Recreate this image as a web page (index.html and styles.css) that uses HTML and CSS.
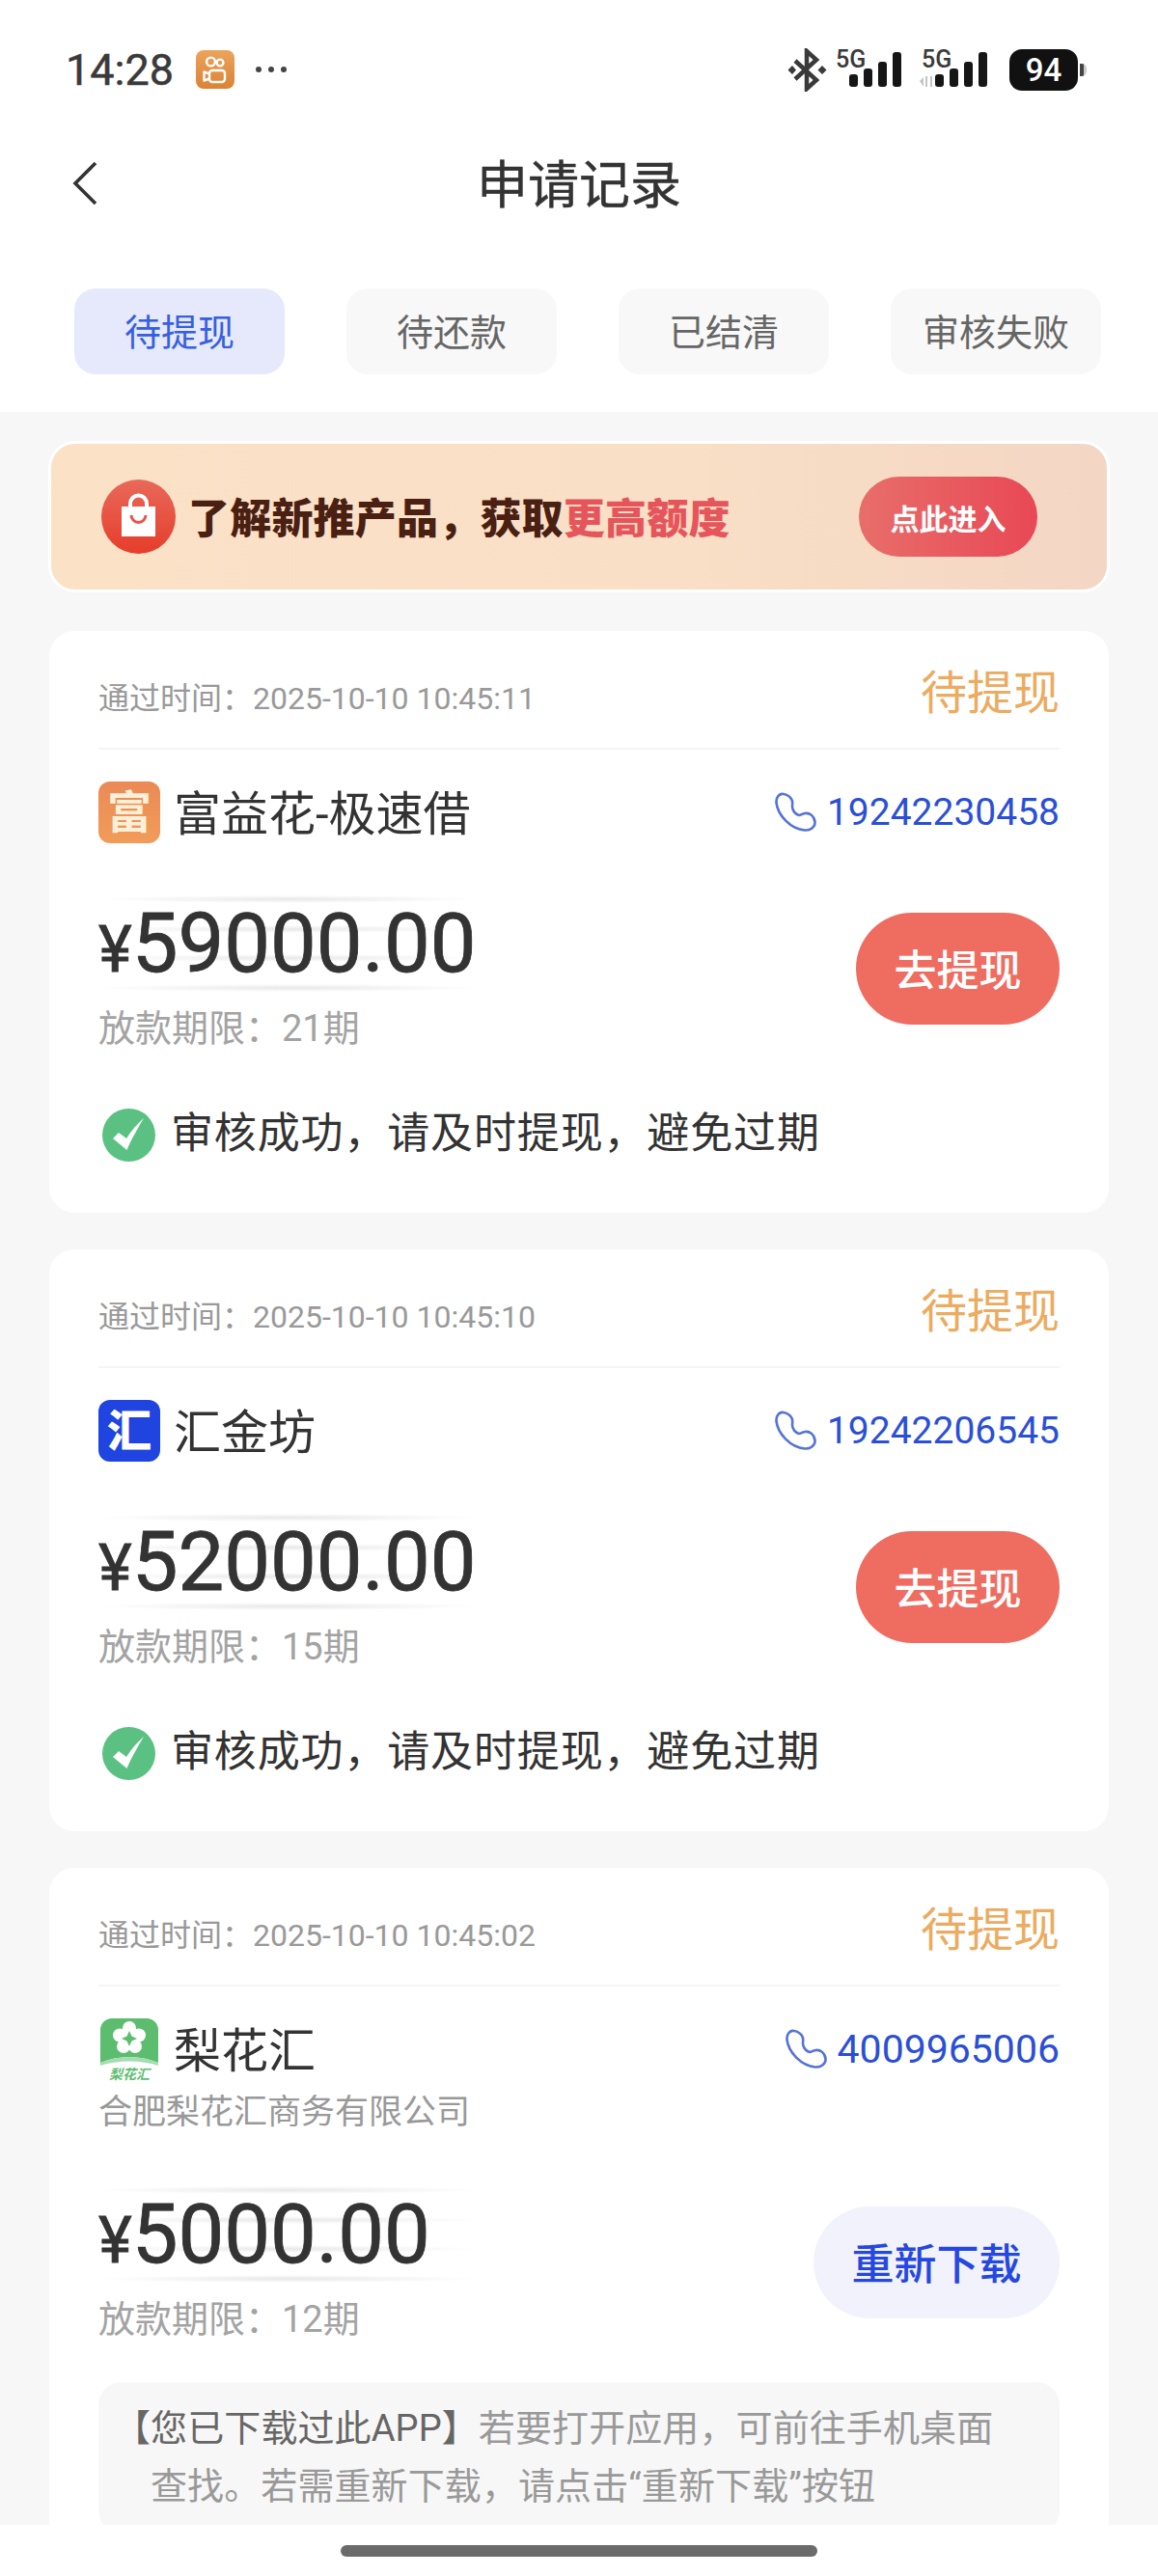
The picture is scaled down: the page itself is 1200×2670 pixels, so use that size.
FILE: index.html
```html
<!DOCTYPE html>
<html lang="zh-CN">
<head>
    <meta charset="UTF-8">
    <meta name="viewport" content="width=device-width, initial-scale=1.0">
    <title>申请记录</title>
    <link rel="stylesheet" href="styles.css">
</head>
<body>
    <header class="top">
        <div class="status-bar">
            <div class="status-left">
                <span class="clock">14:28</span>
                <svg class="ks-icon" viewBox="0 0 40 40">
                    <defs>
                        <linearGradient id="ksBg" x1="0" y1="0" x2="0" y2="1">
                            <stop offset="0" stop-color="#eba45c"/>
                            <stop offset="1" stop-color="#dc8235"/>
                        </linearGradient>
                    </defs>
                    <rect width="40" height="40" rx="8" fill="url(#ksBg)"/>
                    <g fill="none" stroke="#fff" stroke-width="2.4">
                        <circle cx="15.5" cy="12" r="4.4"/>
                        <circle cx="25" cy="13" r="3.4"/>
                        <rect x="14" y="21" width="16" height="12" rx="3"/>
                        <path d="M14 24.5l-5.5-2v9l5.5-2" stroke-linejoin="round"/>
                    </g>
                </svg>
                <svg class="more-dots" viewBox="0 0 34 8">
                    <circle cx="4" cy="4" r="3" fill="#444"/>
                    <circle cx="17" cy="4" r="3" fill="#444"/>
                    <circle cx="30" cy="4" r="3" fill="#444"/>
                </svg>
            </div>
            <div class="status-right">
                <svg class="bt-icon" viewBox="0 0 41 45">
                    <path d="M8 13l22 20-10 9V3l10 9L8 32" fill="none" stroke="#3a3a3a" stroke-width="4.500"/>
                    <path d="M5 18l4 4.500-4 4.500-4.500-4.500zM36 18l4.500 4.500-4.500 4.500-4.500-4.500z" fill="#3a3a3a"/>
                </svg>
                <div class="signal">
                    <span class="signal-text">5G</span>
                    <svg class="signal-bars" viewBox="0 0 70 40">
                        <rect x="15" y="25" width="9" height="13" rx="3" fill="#161616"/>
                        <rect x="30" y="19" width="9" height="19" rx="3" fill="#161616"/>
                        <rect x="45" y="12" width="9" height="26" rx="3" fill="#161616"/>
                        <rect x="60" y="2" width="9" height="36" rx="3" fill="#161616"/>
                    </svg>
                </div>
                <div class="signal signal-second">
                    <span class="signal-text">5G</span>
                    <svg class="signal-bars" viewBox="0 0 74 40">
                        <path d="M3 32l4-4v10zM9 27h2v11H9zM14 27h2v11h-2z" fill="#c4c4c4"/>
                        <rect x="19" y="25" width="9" height="13" rx="3" fill="#161616"/>
                        <rect x="34" y="19" width="9" height="19" rx="3" fill="#161616"/>
                        <rect x="49" y="12" width="9" height="26" rx="3" fill="#161616"/>
                        <rect x="64" y="2" width="9" height="36" rx="3" fill="#161616"/>
                    </svg>
                </div>
                <div class="battery"><span class="battery-level">94</span></div>
                <div class="battery-nub"></div>
            </div>
        </div>

        <nav class="nav">
            <svg class="back" viewBox="0 0 28 48">
                <path d="M25 3L4 24l21 21" fill="none" stroke="#333" stroke-width="3.600"/>
            </svg>
            <h1 class="nav-title">申请记录</h1>
        </nav>

        <div class="tabs">
            <div class="tab tab-active">待提现</div>
            <div class="tab">待还款</div>
            <div class="tab">已结清</div>
            <div class="tab">审核失败</div>
        </div>
    </header>

    <main class="list">
        <div class="banner">
            <svg class="bag-icon" viewBox="0 0 77 77">
                <defs>
                    <linearGradient id="bagBg" x1="0" y1="0" x2="0" y2="1">
                        <stop offset="0" stop-color="#e8695a"/>
                        <stop offset="1" stop-color="#e63d2b"/>
                    </linearGradient>
                </defs>
                <circle cx="38.500" cy="38.500" r="38.500" fill="url(#bagBg)"/>
                <path d="M30 31v-6a8.500 8.500 0 0 1 17 0v6" fill="none" stroke="#fff" stroke-width="4"/>
                <path d="M21 28h35v31H21z" fill="#fff"/>
                <path d="M31 37a7.500 7.500 0 0 0 15 0" fill="none" stroke="#e8554a" stroke-width="3"/>
            </svg>
            <div class="banner-text">了解新推产品，获取<span class="banner-hot">更高额度</span></div>
            <div class="banner-btn">点此进入</div>
        </div>

        <section class="card">
            <div class="card-head">
                <span class="pass-time">通过时间：2025-10-10 10:45:11</span>
                <span class="state">待提现</span>
            </div>
            <div class="app-row">
                <div class="app-logo logo-fu">富</div>
                <span class="app-name">富益花-极速借</span>
                <span class="phone">
                    <svg class="phone-icon" viewBox="0 0 44 42"><path d="M9 2C5 1 1 5 1.500 11 3 24 16 38 31 39.500c6 .5 11-3.500 10.500-8.500C41 25 36 21 31 22c-3 .5-4 2-6 2-4-1-7-5-7-9 0-3 1-5-1-8-2-3-5-4.500-8-5z" fill="none" stroke="#5573d8" stroke-width="2.600"/></svg>
                    19242230458
                </span>
            </div>
            <div class="amount-row">
                <div class="amount-col">
                    <div class="amount">
                        <div class="amount-marks"><i></i><i></i><i></i><i></i></div>
                        <span class="yen">¥</span>59000.00
                    </div>
                    <div class="term">放款期限：21期</div>
                </div>
                <div class="btn btn-red">去提现</div>
            </div>
            <div class="ok-row">
                <svg class="ok-icon" viewBox="0 0 55 55">
                    <circle cx="27.500" cy="27.500" r="27.500" fill="#5bc183"/>
                    <path d="M11 31l6-6 8 6c5-8 11-15 18-21-6 10-13 22-17.500 33z" fill="#fff"/>
                </svg>
                <span class="ok-text">审核成功，请及时提现，避免过期</span>
            </div>
        </section>

        <section class="card">
            <div class="card-head">
                <span class="pass-time">通过时间：2025-10-10 10:45:10</span>
                <span class="state">待提现</span>
            </div>
            <div class="app-row">
                <div class="app-logo logo-hui">汇</div>
                <span class="app-name">汇金坊</span>
                <span class="phone">
                    <svg class="phone-icon" viewBox="0 0 44 42"><path d="M9 2C5 1 1 5 1.500 11 3 24 16 38 31 39.500c6 .5 11-3.500 10.500-8.500C41 25 36 21 31 22c-3 .5-4 2-6 2-4-1-7-5-7-9 0-3 1-5-1-8-2-3-5-4.500-8-5z" fill="none" stroke="#5573d8" stroke-width="2.600"/></svg>
                    19242206545
                </span>
            </div>
            <div class="amount-row">
                <div class="amount-col">
                    <div class="amount">
                        <div class="amount-marks"><i></i><i></i><i></i><i></i></div>
                        <span class="yen">¥</span>52000.00
                    </div>
                    <div class="term">放款期限：15期</div>
                </div>
                <div class="btn btn-red">去提现</div>
            </div>
            <div class="ok-row">
                <svg class="ok-icon" viewBox="0 0 55 55">
                    <circle cx="27.500" cy="27.500" r="27.500" fill="#5bc183"/>
                    <path d="M11 31l6-6 8 6c5-8 11-15 18-21-6 10-13 22-17.500 33z" fill="#fff"/>
                </svg>
                <span class="ok-text">审核成功，请及时提现，避免过期</span>
            </div>
        </section>

        <section class="card">
            <div class="card-head">
                <span class="pass-time">通过时间：2025-10-10 10:45:02</span>
                <span class="state">待提现</span>
            </div>
            <div class="app-row">
                <div class="app-logo logo-li">
                    <svg class="li-flower" viewBox="0 0 60 50">
                        <path d="M0 12A12 12 0 0 1 12 0h36a12 12 0 0 1 12 12v34c-18-8-42-8-60 0z" fill="#5cbd6f"/>
                        <path d="M0 46c18-8 42-8 60 0v3C42 43 18 43 0 49z" fill="#a5dcb0"/>
                        <g fill="#fff">
                            <circle cx="30" cy="10" r="7"/>
                            <circle cx="40" cy="17.500" r="7"/>
                            <circle cx="36" cy="29" r="7"/>
                            <circle cx="24" cy="29" r="7"/>
                            <circle cx="20" cy="17.500" r="7"/>
                            <circle cx="30" cy="21" r="9"/>
                        </g>
                        <path d="M30 13l2.500 5.500L38 21l-5.500 2.500L30 29l-2.500-5.500L22 21l5.500-2.500z" fill="#5cbd6f"/>
                    </svg>
                    <span class="li-name">梨花汇</span>
                </div>
                <span class="app-name">梨花汇</span>
                <span class="phone phone-wide">
                    <svg class="phone-icon" viewBox="0 0 44 42"><path d="M9 2C5 1 1 5 1.500 11 3 24 16 38 31 39.500c6 .5 11-3.500 10.500-8.500C41 25 36 21 31 22c-3 .5-4 2-6 2-4-1-7-5-7-9 0-3 1-5-1-8-2-3-5-4.500-8-5z" fill="none" stroke="#5573d8" stroke-width="2.600"/></svg>
                    4009965006
                </span>
            </div>
            <div class="company">合肥梨花汇商务有限公司</div>
            <div class="amount-row amount-row-tight">
                <div class="amount-col">
                    <div class="amount">
                        <div class="amount-marks"><i></i><i></i><i></i><i></i></div>
                        <span class="yen">¥</span>5000.00
                    </div>
                    <div class="term">放款期限：12期</div>
                </div>
                <div class="btn btn-soft">重新下载</div>
            </div>
            <div class="notice">
                <span class="notice-strong">【您已下载过此APP】</span>若要打开应用，可前往手机桌面<br>查找。若需重新下载，请点击“重新下载”按钮
            </div>
        </section>
    </main>

    <footer class="home-area">
        <div class="home-bar"></div>
    </footer>
</body>
</html>
```

FILE: styles.css
```css
* {
    box-sizing: border-box;
}

body {
    font-family: Roboto, "Noto Sans CJK SC", sans-serif;
    background-color: #fff;
    color: #333;
    margin: 0;
    width: 1200px;
    height: 2670px;
    display: flex;
    flex-direction: column;
    overflow: hidden;
}

/* top area */
.top {
    background-color: #fff;
    height: 427px;
    flex-shrink: 0;
}

.status-bar {
    height: 144px;
    padding: 0 74px 0 68px;
    display: flex;
    justify-content: space-between;
    align-items: center;
}

.status-left {
    display: flex;
    align-items: center;
}

.clock {
    font-size: 45px;
    -webkit-text-stroke: 0.5px #3a3a3a;
    color: #3a3a3a;
    line-height: 1;
}

.ks-icon {
    width: 40px;
    height: 40px;
    margin-left: 23px;
}

.more-dots {
    width: 34px;
    height: 8px;
    margin-left: 21px;
}

.status-right {
    display: flex;
    align-items: center;
}

.bt-icon {
    width: 41px;
    height: 45px;
}

.signal {
    position: relative;
    width: 70px;
    height: 40px;
    margin-left: 8px;
}

.signal-second {
    width: 74px;
    margin-left: 15px;
}

.signal-bars {
    display: block;
    width: 100%;
    height: 40px;
}

.signal-text {
    position: absolute;
    left: 1px;
    top: -1px;
    font-size: 25px;
    font-weight: 500;
    line-height: 22px;
    color: #3a3a3a;
}

.signal-second .signal-text {
    left: 5px;
}

.battery {
    width: 71px;
    height: 43px;
    margin-left: 22px;
    background-color: #111;
    border-radius: 13px;
    display: flex;
    justify-content: center;
    align-items: center;
}

.battery-level {
    color: #fff;
    font-size: 33px;
    font-weight: 500;
    line-height: 1;
}

.battery-nub {
    width: 7px;
    height: 13px;
    margin-left: 2px;
    border-radius: 0 5px 5px 0;
    background: linear-gradient(to right, #444 50%, #c9c9c9 50%);
}

.nav {
    height: 92px;
    display: grid;
    grid-template-columns: 1fr auto 1fr;
    align-items: center;
    padding-left: 74px;
}

.back {
    width: 28px;
    height: 48px;
}

.nav-title {
    margin: 6px 0 0 -74px;
    font-size: 53px;
    font-weight: 400;
    -webkit-text-stroke: 0.5px #333;
    color: #333;
    line-height: 1;
}

.tabs {
    margin-top: 63px;
    padding: 0 59px 0 77px;
    display: flex;
    justify-content: space-between;
}

.tab {
    width: 218px;
    height: 89px;
    padding-bottom: 4px;
    border-radius: 22px;
    background-color: #f8f8f8;
    color: #666;
    font-size: 38px;
    display: flex;
    justify-content: center;
    align-items: center;
}

.tab-active {
    background-color: #e5e9fb;
    color: #3560e0;
}

/* list */
.list {
    flex: 1;
    min-height: 0;
    overflow: hidden;
    background-color: #f7f7f8;
    padding: 30px 51px 0;
}

.banner {
    height: 157px;
    margin: 0 -1px 40px;
    border: 3px solid #fff;
    border-radius: 28px;
    background: linear-gradient(to right, #fbe1c6, #f9dfc6 60%, #f3d6c4);
    display: flex;
    align-items: center;
    padding: 0 72px 0 52px;
}

.bag-icon {
    width: 77px;
    height: 77px;
    flex-shrink: 0;
}

.banner-text {
    margin-left: 13px;
    padding-bottom: 4px;
    font-size: 43px;
    font-weight: 900;
    letter-spacing: 0.2px;
    color: #4a2012;
    flex: 1;
    white-space: nowrap;
}

.banner-hot {
    color: #e6555c;
}

.banner-btn {
    width: 185px;
    height: 83px;
    border-radius: 42px;
    background: linear-gradient(to right, #e86e6a, #e84855);
    color: #fff;
    font-size: 30px;
    font-weight: 700;
    display: flex;
    justify-content: center;
    align-items: center;
}

.card {
    background-color: #fff;
    border-radius: 26px;
    padding: 0 51px 53px;
    margin-bottom: 38px;
}

.card-head {
    height: 123px;
    border-bottom: 2px solid #f5f5f5;
    display: flex;
    justify-content: space-between;
    align-items: baseline;
    padding-top: 41px;
}

.pass-time {
    font-size: 32px;
    color: #999;
}

.state {
    font-size: 48px;
    color: #ebab60;
    line-height: 1;
}

.app-row {
    margin-top: 33px;
    height: 64px;
    display: flex;
    align-items: center;
}

.app-logo {
    width: 64px;
    height: 64px;
    border-radius: 12px;
    color: #fff;
    font-size: 46px;
    font-weight: 700;
    line-height: 1;
    display: flex;
    justify-content: center;
    align-items: center;
    flex-shrink: 0;
}

.logo-fu {
    background: linear-gradient(to bottom, #ea8a55, #f19c5a);
    color: #fdf0d8;
}

.logo-hui {
    background-color: #1f44e0;
    font-weight: 900;
}

.logo-li {
    position: relative;
    display: block;
    width: 60px;
    margin: 0 2px;
    background-color: #fff;
}

.li-flower {
    display: block;
    width: 60px;
    height: 50px;
}

.li-name {
    position: absolute;
    left: 0;
    right: 0;
    bottom: -1px;
    color: #5cbd6f;
    font-size: 14px;
    font-weight: 700;
    font-style: italic;
    text-align: center;
}

.app-name {
    margin-left: 14px;
    padding-bottom: 6px;
    font-size: 49px;
    color: #333;
    flex: 1;
}

.phone {
    font-size: 39px;
    color: #2a4fd6;
    display: flex;
    align-items: center;
    gap: 10px;
}

.phone-wide {
    font-size: 41px;
}

.phone-icon {
    width: 44px;
    height: 42px;
}

.company {
    margin-top: 12px;
    font-size: 35px;
    line-height: 44px;
    color: #999;
}

.amount-row {
    margin-top: 62px;
    display: flex;
    justify-content: space-between;
    align-items: flex-start;
}

.amount-row-tight {
    margin-top: 62px;
}

.amount {
    position: relative;
    z-index: 0;
    font-size: 85px;
    -webkit-text-stroke: 0.8px #333;
    line-height: 84px;
    color: #333;
}

.yen {
    font-size: 66px;
}

/* faint streaks behind the sum */
.amount-marks {
    position: absolute;
    z-index: -1;
    left: 0;
    top: -8px;
    width: 395px;
    height: 100px;
    display: flex;
    flex-direction: column;
    justify-content: space-between;
}

.amount-marks i {
    display: block;
    height: 8px;
    background: radial-gradient(ellipse closest-side, #e8e8e8, rgba(255, 255, 255, 0));
}

.term {
    margin-top: 17px;
    font-size: 38px;
    line-height: 44px;
    color: #a3a3a3;
}

.btn {
    margin-top: 10px;
    height: 116px;
    padding-bottom: 3px;
    border-radius: 58px;
    font-size: 44px;
    font-weight: 500;
    display: flex;
    justify-content: center;
    align-items: center;
}

.btn-red {
    width: 211px;
    background-color: #ef6c60;
    color: #fff;
}

.btn-soft {
    width: 255px;
    margin-top: 13px;
    background-color: #f2f2fd;
    color: #2448e0;
}

.ok-row {
    margin-top: 61px;
    padding-left: 4px;
    display: flex;
    align-items: center;
}

.ok-icon {
    width: 55px;
    height: 55px;
    flex-shrink: 0;
}

.ok-text {
    margin-left: 16px;
    padding-bottom: 4px;
    font-size: 44px;
    line-height: 1;
    letter-spacing: 0.85px;
    color: #333;
}

.notice {
    margin-top: 43px;
    border-radius: 24px;
    background-color: #f7f7f7;
    padding: 18px 16px 19px 54px;
    text-indent: -38px;
    font-size: 38px;
    letter-spacing: 0.1px;
    line-height: 60px;
    color: #999;
    white-space: nowrap;
}

.notice-strong {
    color: #666;
}

.home-area {
    height: 53px;
    flex-shrink: 0;
    background-color: #fff;
    padding-top: 21px;
}

.home-bar {
    width: 494px;
    height: 12px;
    margin: 0 auto;
    border-radius: 6px;
    background-color: #6b6b6b;
}
```
